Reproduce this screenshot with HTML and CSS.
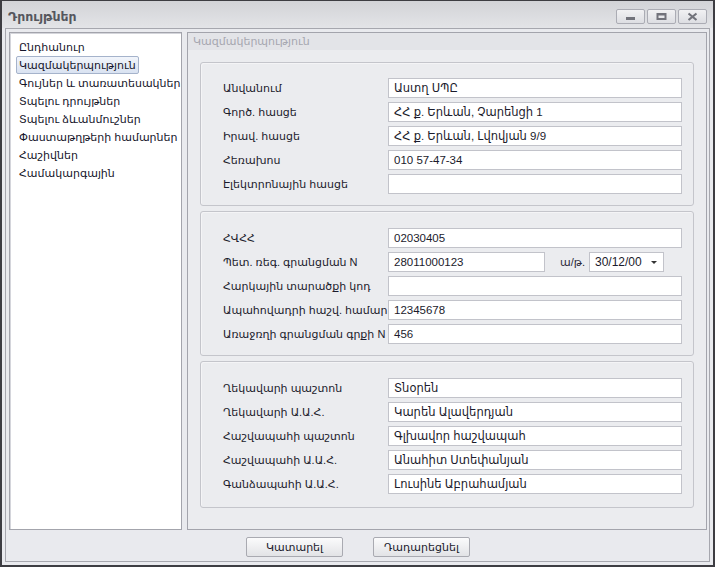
FILE: index.html
```html
<!DOCTYPE html>
<html lang="hy">
<head>
<meta charset="utf-8">
<title>Դրույթներ</title>
<link rel="stylesheet" href="styles.css">
</head>
<body>
<div class="window">
  <div class="titlebar">
    <div class="title">Դրույթներ</div>
    <div class="tbtns">
      <div class="tbtn"><svg width="29" height="15" viewBox="0 0 29 15"><rect x="10" y="8" width="9" height="3" fill="#72737b"/></svg></div>
      <div class="tbtn"><svg width="29" height="15" viewBox="0 0 29 15"><path d="M9.5 4h10v7h-10z M11.5 6.5v2.5h6v-2.5z" fill="#72737b" fill-rule="evenodd"/></svg></div>
      <div class="tbtn"><svg width="29" height="15" viewBox="0 0 29 15"><path d="M10.5 4.5l8 6.5M18.5 4.5l-8 6.5" stroke="#72737b" stroke-width="2.2"/></svg></div>
    </div>
  </div>
  <div class="frame">
    <div class="main">
      <div class="list">
        <div class="item">Ընդհանուր</div>
        <div class="item"><span class="sel">Կազմակերպություն</span></div>
        <div class="item">Գույներ և տառատեսակներ</div>
        <div class="item">Տպելու դրույթներ</div>
        <div class="item">Տպելու ձևանմուշներ</div>
        <div class="item">Փաստաթղթերի համարներ</div>
        <div class="item">Հաշիվներ</div>
        <div class="item">Համակարգային</div>
      </div>
      <div class="panel">
        <div class="phead">Կազմակերպություն</div>
        <div class="pbody">
          <div class="group g1">
            <div class="row"><div class="lbl">Անվանում</div><div class="inp">Աստղ ՍՊԸ</div></div>
            <div class="row"><div class="lbl">Գործ. հասցե</div><div class="inp">ՀՀ ք. Երևան, Չարենցի 1</div></div>
            <div class="row"><div class="lbl">Իրավ. հասցե</div><div class="inp">ՀՀ ք. Երևան, Լվովյան 9/9</div></div>
            <div class="row"><div class="lbl">Հեռախոս</div><div class="inp">010 57-47-34</div></div>
            <div class="row"><div class="lbl">Էլեկտրոնային հասցե</div><div class="inp"></div></div>
          </div>
          <div class="group g2">
            <div class="row"><div class="lbl">ՀՎՀՀ</div><div class="inp">02030405</div></div>
            <div class="row"><div class="lbl">Պետ. ռեգ. գրանցման N</div><div class="inp short">28011000123</div><div class="dlbl">ա/թ.</div><div class="combo"><span>30/12/00</span><span class="arrow"></span></div></div>
            <div class="row"><div class="lbl">Հարկային տարածքի կոդ</div><div class="inp"></div></div>
            <div class="row"><div class="lbl">Ապահովադրի հաշվ. համար</div><div class="inp">12345678</div></div>
            <div class="row"><div class="lbl">Առաջռղի գրանցման գրքի N</div><div class="inp">456</div></div>
          </div>
          <div class="group g3">
            <div class="row"><div class="lbl">Ղեկավարի պաշտոն</div><div class="inp">Տնօրեն</div></div>
            <div class="row"><div class="lbl">Ղեկավարի Ա.Ա.Հ.</div><div class="inp">Կարեն Ալավերդյան</div></div>
            <div class="row"><div class="lbl">Հաշվապահի պաշտոն</div><div class="inp">Գլխավոր հաշվապահ</div></div>
            <div class="row"><div class="lbl">Հաշվապահի Ա.Ա.Հ.</div><div class="inp">Անահիտ Ստեփանյան</div></div>
            <div class="row"><div class="lbl">Գանձապահի Ա.Ա.Հ.</div><div class="inp">Լուսինե Աբրահամյան</div></div>
          </div>
        </div>
      </div>
    </div>
    <div class="footer">
      <div class="btn">Կատարել</div>
      <div class="btn">Դադարեցնել</div>
    </div>
  </div>
</div>
</body>
</html>
```

FILE: styles.css
```css
* { box-sizing: border-box; }
html, body { margin: 0; padding: 0; }
body {
  background: #e9eaee;
  font-family: "Liberation Sans", "DejaVu Sans", sans-serif;
  font-size: 11px;
  color: #1b1b2c;
}
.window {
  width: 715px;
  height: 567px;
  border: 2px solid #3d3d42;
  border-top-width: 1px;
  background: #e9eaee;
  display: flex;
  flex-direction: column;
}
.titlebar {
  height: 27px;
  flex: none;
  display: flex;
  align-items: flex-start;
  justify-content: space-between;
  background: linear-gradient(#d2d3d7, #e3e4e7);
  padding: 8px 6px 0 6px;
}
.title {
  font-weight: bold;
  color: #55565d;
  font-size: 12.5px;
  line-height: 16px;
}
.tbtns { display: flex; gap: 2px; }
.tbtn {
  width: 29px;
  height: 15px;
  border: 1px solid #abacb4;
  border-radius: 2px;
  background: linear-gradient(#f1f1f3, #dddee2);
  display: flex;
  align-items: center;
  justify-content: center;
  overflow: hidden;
}
.tbtn svg { display: block; flex: none; }
.frame {
  flex: 1;
  margin: 0 3px 3px 3px;
  border: 1px solid #a6a7ae;
  display: flex;
  flex-direction: column;
  padding: 3px 2px 0 3px;
}
.main {
  display: flex;
  gap: 5px;
  height: 498px;
}
.list {
  width: 173px;
  background: #fff;
  border: 1px solid #a3a4ac;
  box-shadow: inset 1px 1px 0 #d4d5db;
  padding: 5px 0 0 6px;
  overflow: hidden;
}
.item {
  height: 18px;
  line-height: 18px;
  white-space: nowrap;
  padding-left: 3px;
  color: #15152a;
}
.list .item .sel {
  display: inline-block;
  margin-left: -3px;
  padding: 0 2px 0 2px;
  height: 18px;
  line-height: 16px;
  border: 1px solid #a5b3cb;
  border-radius: 2px;
  background: linear-gradient(#f2f5fb, #d9e2f1);
}
.panel {
  width: 520px;
  border: 1px solid #a3a4ac;
  display: flex;
  flex-direction: column;
  background: #ebecef;
}
.phead {
  height: 17px;
  line-height: 17px;
  background: #e3e4e8;
  color: #a6a7b0;
  padding-left: 5px;
}
.pbody {
  padding: 12px 12px 0 12px;
  display: flex;
  flex-direction: column;
  gap: 5px;
}
.group {
  border: 1px solid #c4c5cb;
  border-radius: 3px;
  box-shadow: inset 1px 1px 0 #f4f4f6;
  display: flex;
  flex-direction: column;
  gap: 4px;
  padding: 15px 11px 11px 22px;
}
.g2 { padding-top: 16px; padding-bottom: 11px; }
.g3 { padding-top: 16px; padding-bottom: 13px; }
.row {
  display: flex;
  align-items: center;
  height: 20px;
}
.lbl {
  width: 165px;
  flex: none;
  white-space: nowrap;
}
.inp {
  flex: 1;
  height: 20px;
  background: #fff;
  border: 1px solid #c2c3ca;
  line-height: 18px;
  padding-left: 5px;
  white-space: nowrap;
  overflow: hidden;
  font-size: 11.5px;
}
.inp.short { flex: none; width: 157px; }
.dlbl { margin-left: 15px; width: 29px; flex: none; white-space: nowrap; color: #2a2a3a; }
.combo {
  width: 75px;
  flex: none;
  height: 20px;
  background: #fff;
  border: 1px solid #c2c3ca;
  line-height: 18px;
  padding-left: 5px;
  display: flex;
  justify-content: space-between;
  align-items: center;
  padding-right: 6px;
  font-size: 12px;
}
.arrow {
  width: 0;
  height: 0;
  border-left: 3px solid transparent;
  border-right: 3px solid transparent;
  border-top: 3px solid #333;
}
.footer {
  flex: 1;
  display: flex;
  justify-content: center;
  gap: 30px;
  padding-top: 7px;
}
.btn {
  width: 97px;
  height: 20px;
  border: 1px solid #a9aab1;
  border-radius: 2px;
  background: linear-gradient(#fbfbfc, #e2e3e6);
  text-align: center;
  line-height: 18px;
}
```
